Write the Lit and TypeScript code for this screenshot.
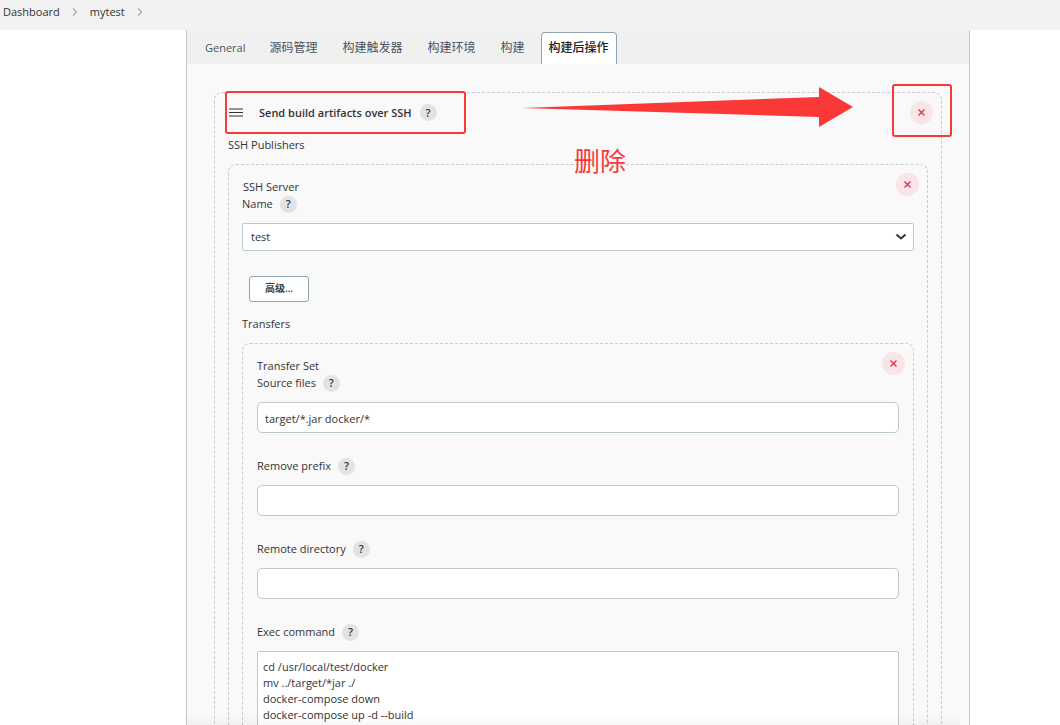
import { LitElement, html, css } from "lit";
import { customElement, property } from "lit/decorators.js";

@customElement("help-button")
class HelpButton extends LitElement {
  @property() topic = "";

  static styles = css`
    :host {
      display: inline-flex;
    }
    .help {
      width: 17px;
      height: 17px;
      padding: 0;
      border: 0;
      border-radius: 50%;
      background: #e3e3e3;
      color: #333;
      font: 600 11px/16px "Open Sans", sans-serif;
      text-align: center;
      cursor: pointer;
    }
  `;

  render() {
    return html`<button class="help" type="button" aria-label="Help for ${this.topic}">?</button>`;
  }
}

@customElement("delete-button")
class DeleteButton extends LitElement {
  static styles = css`
    :host {
      display: flex;
      flex: none;
    }
    .delete {
      display: grid;
      place-items: center;
      width: 23px;
      height: 23px;
      padding: 0;
      border: 0;
      border-radius: 50%;
      background: #f7e5e7;
      cursor: pointer;
    }
  `;

  render() {
    return html`<button class="delete" type="button" aria-label="Delete">
      <svg width="7" height="7" viewBox="0 0 7 7" aria-hidden="true">
        <path d="M.5 .5l6 6M6.500 .5L.5 6.500" fill="none" stroke="#e0274a" stroke-width="1.2" />
      </svg>
    </button>`;
  }
}

@customElement("app-root")
class AppRoot extends LitElement {
  private tabs = ["General", "源码管理", "构建触发器", "构建环境", "构建", "构建后操作"];

  private fields = [
    { id: "source", label: "Source files", value: "target/*.jar docker/*" },
    { id: "prefix", label: "Remove prefix", value: "" },
    { id: "remote", label: "Remote directory", value: "" },
  ];

  private command = "cd /usr/local/test/docker\nmv ../target/*jar ./\ndocker-compose down\ndocker-compose up -d --build";

  static styles = css`
    :host {
      display: block;
      height: 100vh;
      overflow-y: auto;
      scrollbar-width: none;
      background: #fff;
      color: #333;
      font: 400 11px/16px "Open Sans", "Noto Sans CJK SC", sans-serif;
    }
    * {
      box-sizing: border-box;
    }
    .crumbs {
      display: flex;
      align-items: center;
      gap: 12px;
      height: 30px;
      padding: 0 3px 6px;
      background: #f2f2f2;
      font-weight: 500;
    }
    .crumbs a {
      color: #333;
      text-decoration: none;
    }
    .panel {
      position: relative;
      margin: 0 90px 0 186px;
      border: solid #bccad0;
      border-width: 0 1px;
      background: #f9f9f9;
    }
    .tabs {
      display: flex;
      gap: 7px;
      height: 34px;
      padding: 2px 9px 0;
      background: #f0f0f0;
    }
    .tab {
      padding: 0 8px 2px;
      border: 1px solid transparent;
      border-bottom: 0;
      border-radius: 4px 4px 0 0;
      background: none;
      color: #4d545d;
      font: 400 12px/16px "Open Sans", "Noto Sans CJK SC", sans-serif;
      cursor: pointer;
    }
    .tab.latin {
      padding: 0 7px 2px 8px;
      font-size: 11px;
    }
    .tab.active {
      padding: 0 7px 2px;
      border-color: #8fa3b0;
      background: #fff;
      color: #222;
      font-weight: 500;
    }
    .form {
      padding: 28px 27px;
    }
    .box {
      border: 1px dashed #c3cdd2;
      border-radius: 8px;
    }
    .head {
      display: flex;
      justify-content: space-between;
      padding: 8px 8px 0 14px;
    }
    .caption {
      padding-top: 6px;
    }
    .title {
      display: flex;
      align-items: center;
      gap: 8px;
      font-weight: 600;
    }
    .grip {
      margin-right: 8px;
    }
    .body {
      padding: 0 13px 13px;
    }
    .section {
      margin: 0;
      font-size: 11px;
      font-weight: 500;
    }
    .publishers {
      padding: 13px 0 11px;
    }
    .transfers {
      padding: 14px 0 11px;
    }
    .label {
      display: flex;
      align-items: center;
      gap: 7px;
      height: 18px;
      padding-bottom: 2px;
      font-weight: 500;
    }
    .server {
      position: relative;
      display: block;
      margin-top: 9px;
    }
    .select {
      display: block;
      width: 100%;
      height: 28px;
      padding: 0 8px;
      border: 1px solid #bccad0;
      border-radius: 2px;
      appearance: none;
      background: #fff;
      color: #333;
      font: inherit;
    }
    .chevron {
      position: absolute;
      right: 7px;
      top: 10px;
      pointer-events: none;
    }
    .advanced {
      display: block;
      width: 60px;
      height: 26px;
      margin: 25px 7px 0;
      padding: 0 0 3px;
      border: 1px solid #8fa3b0;
      border-radius: 3px;
      background: #fff;
      color: #3c434b;
      font: 600 10px/16px "Open Sans", "Noto Sans CJK SC", sans-serif;
      cursor: pointer;
    }
    .set {
      padding: 0 14px 14px;
    }
    .input,
    .area {
      display: block;
      width: 100%;
      margin: 9px 0 25px;
      border: 1px solid #bccad0;
      border-radius: 5px;
      background: #fff;
      color: #333;
      font: inherit;
    }
    .input {
      height: 31px;
      padding: 2px 7px 0;
    }
    .area {
      height: 88px;
      padding: 7px 5px;
      border-radius: 2px;
      resize: vertical;
    }
    .mark {
      position: absolute;
      border: 2px solid #fb3838;
      border-radius: 3px;
      pointer-events: none;
    }
    .mark-title {
      left: 38px;
      top: 61px;
      width: 241px;
      height: 43px;
    }
    .mark-delete {
      right: 17px;
      top: 54px;
      width: 60px;
      height: 53px;
    }
    .arrow {
      position: absolute;
      left: 335px;
      top: 57px;
      pointer-events: none;
    }
    .note {
      position: absolute;
      left: 387px;
      top: 112px;
      color: #fb3838;
      font: 400 26px/36px "Noto Sans CJK SC", sans-serif;
      pointer-events: none;
    }
    .fade {
      position: fixed;
      right: 100px;
      bottom: 0;
      left: 187px;
      height: 12px;
      background: linear-gradient(transparent, rgba(0, 0, 0, 0.03));
      pointer-events: none;
    }
  `;

  private crumbArrow() {
    return html`<svg width="6" height="8" viewBox="0 0 6 8" aria-hidden="true">
      <path d="M1 .5L4.6 4 1 7.5" fill="none" stroke="#777" stroke-width="1" />
    </svg>`;
  }

  render() {
    return html`
      <nav class="crumbs" aria-label="Breadcrumb">
        <a href="#dashboard">Dashboard</a>${this.crumbArrow()}
        <a href="#mytest">mytest</a>${this.crumbArrow()}
      </nav>
      <main class="panel">
        <div class="tabs" role="tablist">
          ${this.tabs.map((name, i) => {
            const active = i === this.tabs.length - 1;
            return html`<button
              class="tab ${active ? "active" : i === 0 ? "latin" : ""}"
              type="button"
              role="tab"
              aria-selected=${active ? "true" : "false"}
            >${name}</button>`;
          })}
        </div>
        <form class="form">
          <section class="box">
            <div class="head">
              <div class="title">
                <svg class="grip" width="14" height="9" viewBox="0 0 14 9" aria-hidden="true">
                  <path d="M0 1h14M0 4.5h14M0 8h14" stroke="#333" stroke-width="1.2" />
                </svg>
                <span>Send build artifacts over SSH</span>
                <help-button topic="Send build artifacts over SSH"></help-button>
              </div>
              <delete-button></delete-button>
            </div>
            <div class="body">
              <h2 class="section publishers">SSH Publishers</h2>
              <section class="box">
                <div class="head">
                  <div class="caption">SSH Server</div>
                  <delete-button></delete-button>
                </div>
                <div class="body">
                  <div class="label">
                    <label for="server">Name</label>
                    <help-button topic="Name"></help-button>
                  </div>
                  <div class="server">
                    <select class="select" id="server"><option>test</option></select>
                    <svg class="chevron" width="12" height="8" viewBox="0 0 12 8" aria-hidden="true">
                      <path d="M1.5 1.5L6 5.5l4.500-4" fill="none" stroke="#333" stroke-width="2" />
                    </svg>
                  </div>
                  <button class="advanced" type="button">高级...</button>
                  <h3 class="section transfers">Transfers</h3>
                  <section class="box">
                    <div class="head">
                      <div class="caption">Transfer Set</div>
                      <delete-button></delete-button>
                    </div>
                    <div class="set">
                      ${this.fields.map(
                        (f) => html`
                          <div class="label">
                            <label for=${f.id}>${f.label}</label>
                            <help-button topic=${f.label}></help-button>
                          </div>
                          <input class="input" id=${f.id} type="text" .value=${f.value} />
                        `
                      )}
                      <div class="label">
                        <label for="command">Exec command</label>
                        <help-button topic="Exec command"></help-button>
                      </div>
                      <textarea class="area" id="command" .value=${this.command}></textarea>
                    </div>
                  </section>
                </div>
              </section>
            </div>
          </section>
        </form>
        <div class="mark mark-title"></div>
        <div class="mark mark-delete"></div>
        <svg class="arrow" width="332" height="40" viewBox="0 0 332 40" aria-hidden="true">
          <path d="M0 21L297 10V0L331 20 297 40V30Z" fill="#fb3838" />
        </svg>
        <div class="note">删除</div>
      </main>
      <div class="fade"></div>
    `;
  }
}
